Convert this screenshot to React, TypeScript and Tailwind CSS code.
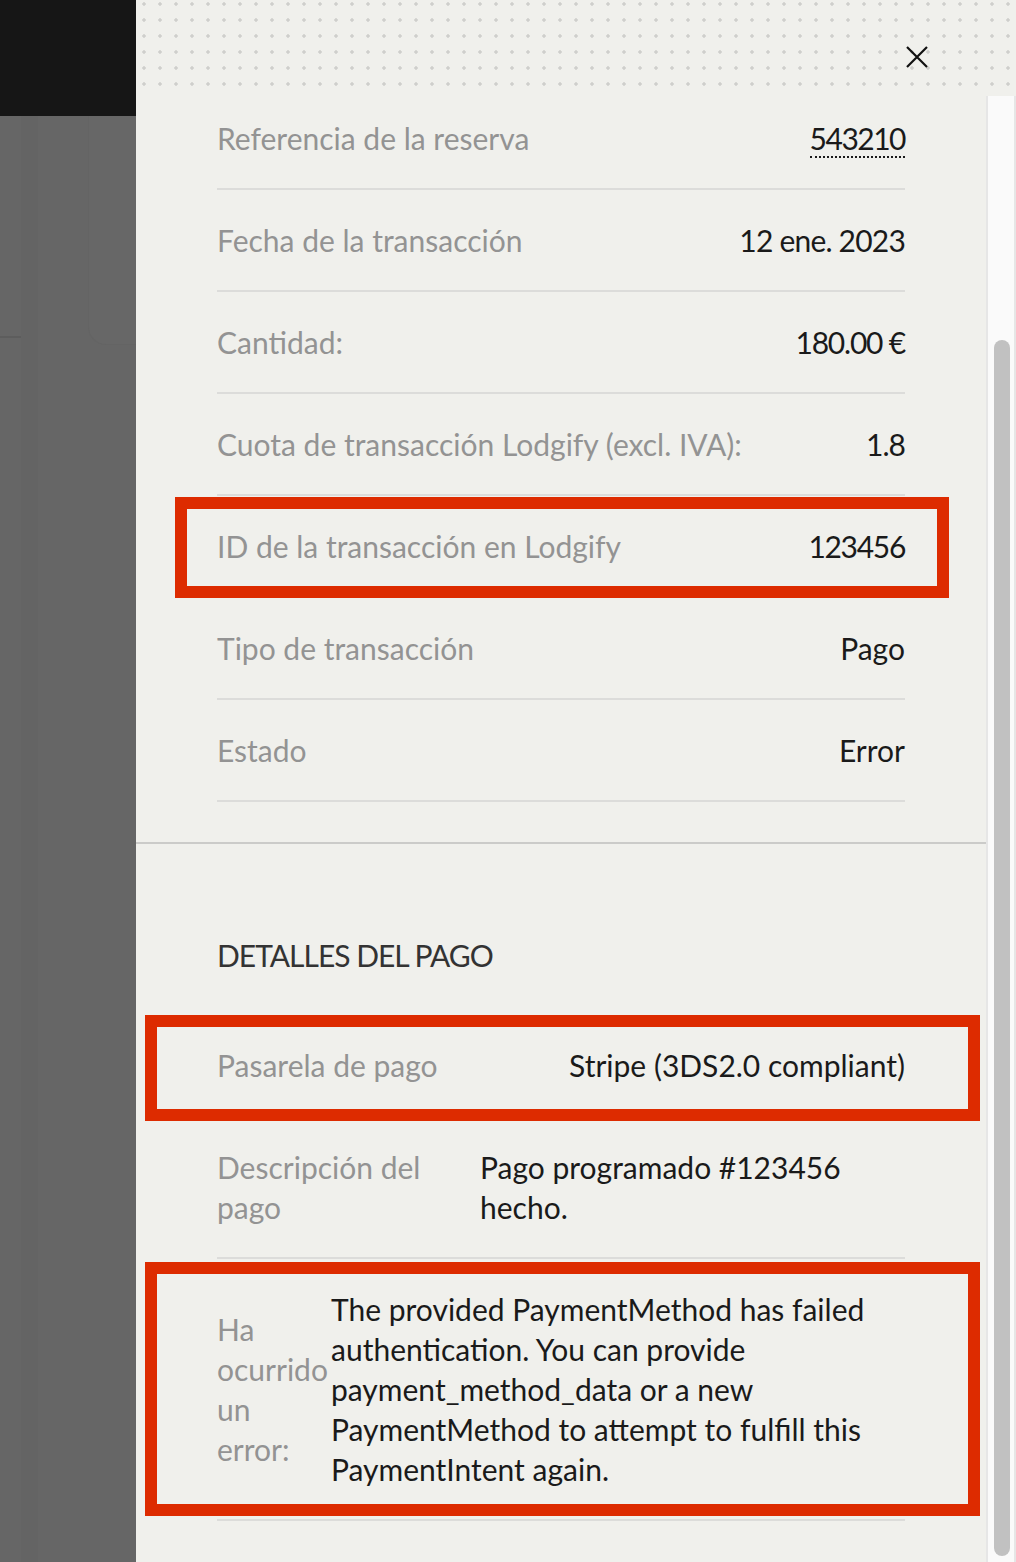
import React from "react";

const rows: { label: string; value: React.ReactNode; track?: string; boxed?: boolean }[] = [
  {
    label: "Referencia de la reserva",
    value: (
      <span className="inline-block border-b-2 border-dotted border-[#1a1a1a] leading-[36px] tracking-[-1.5px]">543210</span>
    ),
  },
  { label: "Fecha de la transacción", value: <span className="tracking-[-0.8px]">12 ene. 2023</span> },
  { label: "Cantidad:", value: <span className="tracking-[-1.2px]">180.00 €</span> },
  { label: "Cuota de transacción Lodgify (excl. IVA):", value: <span className="tracking-[-1px]">1.8</span> },
  { label: "ID de la transacción en Lodgify", value: <span className="tracking-[-1.3px]">123456</span>, boxed: true },
  { label: "Tipo de transacción", value: "Pago" },
  { label: "Estado", value: "Error" },
];

function CloseIcon() {
  return (
    <svg width="22" height="22" viewBox="0 0 22 22" fill="none">
      <path d="M1 1L21 21M21 1L1 21" stroke="#111" strokeWidth="2.2" strokeLinecap="butt" />
    </svg>
  );
}

export default function App() {
  return (
    <div
      className="flex h-[1562px] w-[1016px] overflow-hidden text-[30px] leading-[40px]"
      style={{ fontFamily: "Lato, 'Noto Sans', sans-serif" }}
    >
      {/* dimmed page behind the drawer */}
      <div className="flex w-[136px] shrink-0 flex-col">
        <div className="h-[116px] bg-[#161616]" />
        <div className="flex flex-1 bg-[#666666]">
          <div className="w-[21px]">
            <div className="h-[222px] border-b-2 border-[#5d5d5d]" />
          </div>
          <div className="w-[17px] bg-[#646464]" />
          <div className="flex-1 pl-[50px]">
            <div className="h-[229px] rounded-bl-[18px] border-l border-b border-[#646464] bg-[#676767]" />
          </div>
        </div>
      </div>

      {/* drawer */}
      <div className="flex flex-1 flex-col bg-[#f0f0ec]">
        <div className="flex h-[88px] shrink-0 items-start justify-end bg-[radial-gradient(circle,#cfcfcc_1.5px,transparent_1.8px)] bg-[length:16px_16px] bg-[position:0_-4px] pr-[88px] pt-[46px]">
          <CloseIcon />
        </div>

        <div className="flex flex-1">
          <div className="flex-1 text-[#1a1a1a]">
            <div className="px-[81px] pb-[40px]">
              {rows.map((r) => (
                <div
                  key={r.label}
                  className="relative flex items-center justify-between border-b-2 border-[#dcdcda] py-[30px]"
                >
                  <span className="text-[#939393]">{r.label}</span>
                  <span>{r.value}</span>
                  {r.boxed && (
                    <div className="pointer-events-none absolute left-[-42px] right-[-44px] top-[1px] bottom-[-2px] border-[12px] border-[#dd2b00]" />
                  )}
                </div>
              ))}
            </div>

            <div className="border-t-2 border-[#cbcbc9] px-[81px] pt-[91px]">
              <div className="pb-[40px] uppercase tracking-[-1px] text-[#333333]">Detalles del pago</div>

              <div className="relative flex items-center justify-between border-b-2 border-[#dcdcda] py-[30px]">
                <span className="text-[#939393]">Pasarela de pago</span>
                <span>Stripe (3DS2.0 compliant)</span>
                <div className="pointer-events-none absolute left-[-72px] right-[-75px] top-0 bottom-[-6px] border-[12px] border-[#dd2b00]" />
              </div>

              <div className="flex items-center border-b-2 border-[#dcdcda] py-[30px]">
                <span className="w-[263px] shrink-0 text-[#939393]">
                  Descripción del
                  <br />
                  pago
                </span>
                <span className="flex-1">
                  Pago programado #123456
                  <br />
                  hecho.
                </span>
              </div>

              <div className="relative flex items-center border-b-2 border-[#dcdcda] py-[30px]">
                <span className="w-[114px] shrink-0 whitespace-nowrap text-[#939393]">
                  Ha
                  <br />
                  ocurrido
                  <br />
                  un
                  <br />
                  error:
                </span>
                <span className="flex-1 whitespace-nowrap">
                  The provided PaymentMethod has failed
                  <br />
                  authentication. You can provide
                  <br />
                  payment_method_data or a new
                  <br />
                  PaymentMethod to attempt to fulfill this
                  <br />
                  PaymentIntent again.
                </span>
                <div className="pointer-events-none absolute left-[-72px] right-[-75px] top-[3px] bottom-[3px] border-[12px] border-[#dd2b00]" />
              </div>
            </div>
          </div>

          {/* scrollbar */}
          <div className="mt-[8px] flex w-[30px] shrink-0 flex-col border-l-2 border-r-2 border-[#e6e6e6] bg-[#fafafa] pb-[6px] pl-[6px] pr-[4px] pt-[244px]">
            <div className="flex-1 rounded-full bg-[#c1c1c1]" />
          </div>
        </div>
      </div>
    </div>
  );
}
